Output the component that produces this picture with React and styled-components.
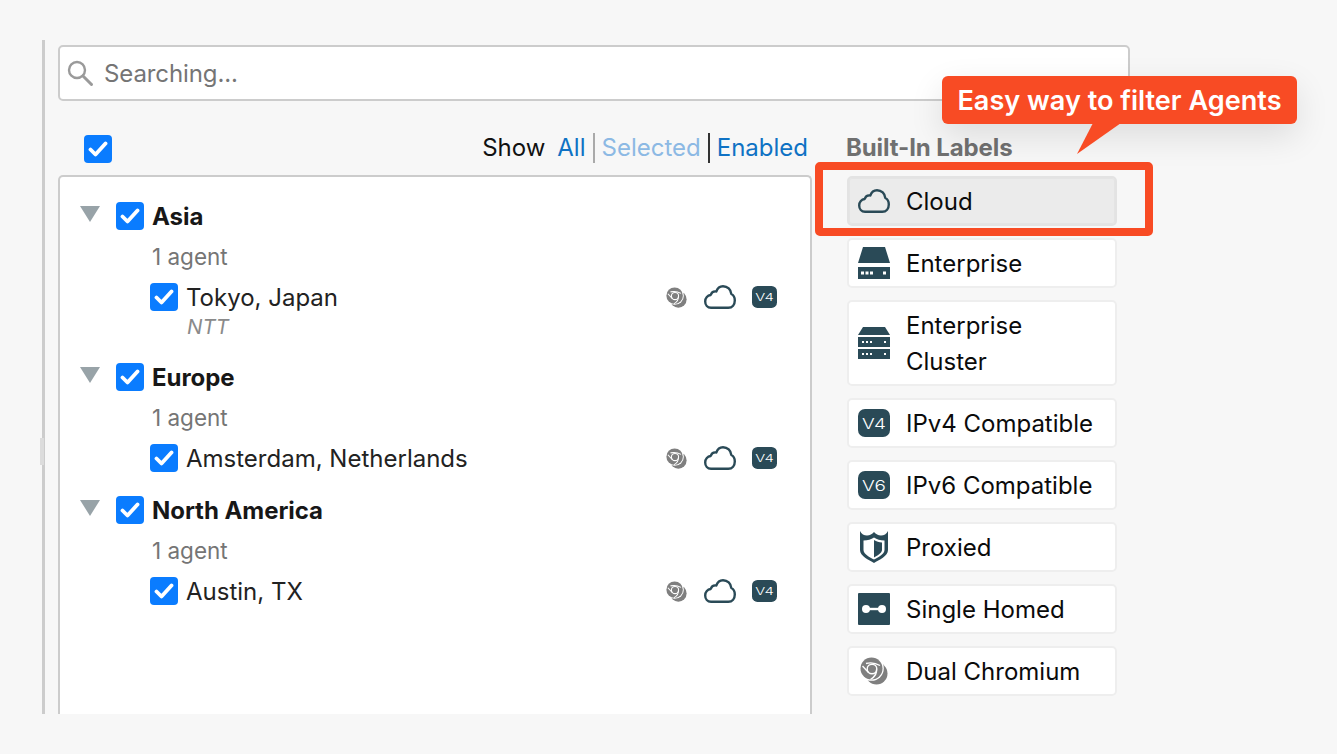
import React from "react";
import styled, { createGlobalStyle } from "styled-components";

const Global = createGlobalStyle`
  html, body { margin: 0; padding: 0; height: 100%; background: #f7f7f7; overflow: hidden; }
  body { font-family: Inter, "Liberation Sans", sans-serif; color: #111; font-kerning: normal; text-rendering: optimizeLegibility; }
`;
const Page = styled.div`
  box-sizing: border-box; width: 1337px; height: 754px; padding: 40px 0 0 42px; background: #f7f7f7;
`;
const Shell = styled.div`
  position: relative; box-sizing: border-box; width: 1088px; height: 674px;
  border-left: 3px solid #ccc; padding: 5px 0 0 13px;
  display: flex; flex-direction: column;
`;
const Handle = styled.div`
  position: absolute; left: -5px; top: 398px; width: 4px; height: 27px; background: #dcdcdc;
`;
const SearchBox = styled.div`
  box-sizing: border-box; width: 1072px; height: 56px; flex: none; background: #fff;
  border: 2px solid #ccc; border-radius: 5px; display: flex; align-items: center; padding-left: 6px; gap: 10px;
  font-size: 24px; color: #757575; letter-spacing: -0.1px;
`;
const Columns = styled.div`
  flex: 1; min-height: 0; display: flex; gap: 35px; 
`;
const LeftCol = styled.div`
  width: 754px; flex: none; display: flex; flex-direction: column; min-height: 0;
`;
const HeaderRow = styled.div`
  height: 74px; flex: none; display: flex; align-items: flex-end; justify-content: space-between;
  padding: 0 4px 12px 26px; box-sizing: border-box;
`;
const Box = styled.span`
  width: 28px; height: 28px; flex: none; background: #0a7cff; border-radius: 4px;
  display: inline-flex; align-items: center; justify-content: center;
`;
const Show = styled.div`
  display: flex; align-items: center; font-size: 24px; line-height: 32px; margin-bottom: -1px;
`;
const ShowLabel = styled.span` color: #111; margin-right: 12px; `;
const Filter = styled.span`
  color: ${p => (p.$muted ? "#8cb9e4" : "#0f72c4")};
  padding-right: 7px; margin-right: 1px;
  &:last-child { padding: 0; margin: 0; }
`;
const Bar = styled.span`
  width: 2px; height: 30px; margin-right: 7px; margin-left: -1px; background: ${p => p.$dark ? "#333" : "#aaa"};
`;
const Panel = styled.div`
  flex: 1; min-height: 0; box-sizing: border-box; background: #fff;
  border: 2px solid #ccc; border-bottom: 0; border-radius: 5px 5px 0 0;
  padding: 23px 0 0 20px;
`;
const Group = styled.section`
  margin-bottom: ${p => p.$gap}px;
`;
const GroupHead = styled.div`
  display: flex; align-items: center; height: 32px; 
`;
const Triangle = styled.span`
  width: 20px; height: 16px; flex: none; margin-right: 16px; background: #98a3a8;
  clip-path: polygon(0 0, 100% 0, 50% 100%);
  position: relative; top: -2px;
`;
const GroupName = styled.span` font-weight: 700; font-size: 24px; margin-left: 8px; color: #171717; letter-spacing: -0.05px;`;
const Count = styled.div`
  font-size: 22.5px; line-height: 32px; color: #757575; margin: 9px 0 0 72px; 
`;
const Agent = styled.div`
  display: flex; align-items: center; height: 32px; margin: 8px 0 0 70px; width: 627px; font-size: 24px;
`;
const AgentName = styled.span` margin-left: 8px; flex: 1; color: #222; `;
const Meta = styled.div`
  font-size: 20.5px; line-height: 26px; font-style: italic; color: #8a8a8a; margin: 1px 0 0 107px;
`;
const AgentIcons = styled.div`
  display: flex; align-items: center; width: 111px; flex: none; justify-content: space-between;
`;
const RightCol = styled.div`
  width: 270px; flex: none; position: relative; display: flex; flex-direction: column;
`;
const Title = styled.div`
  font-size: 24px; font-weight: 700; color: #707070; height: 75px; box-sizing: border-box;
  padding-top: 31px; line-height: 32px; letter-spacing: -0.1px; margin-left: -1px;
`;
const Labels = styled.div` display: flex; flex-direction: column; gap: 12px; `;
const Label = styled.div`
  box-sizing: border-box; min-height: 50px; display: flex; align-items: center;
  border: 2px solid ${p => p.$on ? "#e3e3e3" : "#eee"}; border-radius: 5px;
  background: ${p => p.$on ? "#ebebeb" : "#fff"};
  box-shadow: ${p => p.$on ? "inset 0 0 0 1px #e4e4e4" : "none"};
  padding: 4px 10px 4px 9px; font-size: 24px; line-height: 36px; color: #0b0b0b;
`;
const LabelText = styled.span` padding-top: 2px; `;
const IconSlot = styled.span`
  width: 32px; height: 32px; flex: none; margin-right: 16px; display: flex; align-items: center; justify-content: center;
`;
const Highlight = styled.div`
  position: absolute; left: -32px; top: 61px; width: 338px; height: 74px; box-sizing: border-box;
  border: 8px solid #f84b24; border-radius: 5px; pointer-events: none;
`;
const Callout = styled.div`
  position: absolute; left: 95px; top: -25px; box-sizing: border-box; width: 355px; height: 48px; padding-top: 1px;
  background: #f84b24; border-radius: 6px; color: #fff; font-size: 27.1px; font-weight: 600; line-height: 48px;
  text-align: center; white-space: nowrap; box-shadow: 0 12px 34px rgba(0,0,0,.11);
  &::after {
    content: ""; position: absolute; left: 135px; top: 47px; width: 44px; height: 31px; background: #f84b24;
    clip-path: polygon(16px 0, 100% 0, 0 100%);
  }
`;

const SLATE = "#2a4a57";
const Check = () => (
  <svg width="20" height="16" viewBox="0 0 20 16"><path d="M2.5 8.5 7.5 13.5 17.5 2.5" fill="none" stroke="#fff" strokeWidth="3.8" strokeLinecap="round" strokeLinejoin="round"/></svg>
);
const CB = () => <Box><Check/></Box>;
const Search = () => (
  <svg width="28" height="28" viewBox="0 0 28 28" fill="none" stroke="#9a9a9a"><circle cx="11" cy="11" r="8" strokeWidth="2.4"/><path d="M17 17 25.5 25.5" strokeWidth="3" strokeLinecap="round"/></svg>
);
const Cloud = ({ size = 32 }) => (
  <svg width={size} height={size * 0.75} viewBox="0 0 32 24" fill="none" stroke={SLATE} strokeWidth="2.4" strokeLinejoin="round">
    <path d="M7 22.700C3.500 22.700 1.200 20 1.200 16.500c0-3.500 2.500-6 5.500-6.500C7.500 7.500 9.500 6 12.300 6.500 13.500 3 16 1.200 19 1.200c4.500 0 8 3.500 8.300 7.800 2.500 1.200 3.500 3.500 3.500 6.500 0 4-2.500 7.200-6.500 7.200Z"/>
  </svg>
);
const Chrome = ({ size = 28 }) => (
  <svg width={size} height={size} viewBox="0 0 28 28">
    <circle cx="16.500" cy="16.500" r="11" fill="#7f7f7f"/>
    <circle cx="11.500" cy="11.500" r="12.300" fill="#fff"/>
    <circle cx="11.500" cy="11.500" r="11" fill="#7f7f7f"/>
    <g fill="none" stroke="#fff" strokeWidth="1.400">
      <circle cx="12" cy="12" r="4.800"/>
      <path d="M6 6.500C10 5.500 16 6.200 20 8.500"/>
      <path d="M16.500 12.500C17 16 14.500 20 10.500 22.500"/>
      <path d="M2.500 9 8.500 15.500"/>
    </g>
  </svg>
);
const Version = ({ text, size = 32 }) => (
  <svg width={size} height={size * 28 / 32} viewBox="0 0 32 28">
    <rect x="0" y="0" width="32" height="28" rx="7" fill={SLATE}/>
    <text x="16" y="19.500" textAnchor="middle" fontFamily="Inter, sans-serif" fontWeight="300" fontSize="14" fill="#fff" textLength="24" lengthAdjust="spacingAndGlyphs">{text}</text>
  </svg>
);
const Enterprise = () => (
  <svg width="32" height="32" viewBox="0 0 32 32">
    <path d="M5 0H27L32 16H0Z" fill={SLATE}/>
    <rect y="20" width="32" height="12" fill={SLATE}/>
    <path d="M3 24.500h3v3H3zM7.500 24.500h3v3h-3zM12 24.500h3v3h-3zM25 24.500h3v3h-3z" fill="#fff"/>
  </svg>
);
const Cluster = () => (
  <svg width="32" height="32" viewBox="0 0 32 32">
    <path d="M5 0H27L32 8H0Z" fill={SLATE}/>
    <rect y="10" width="32" height="10" fill={SLATE}/>
    <rect y="22" width="32" height="10" fill={SLATE}/>
    <path d="M4 14h2v2H4zM8 14h2v2H8zM12 14h2v2h-2zM26 14h2v2h-2zM4 26h2v2H4zM8 26h2v2H8zM12 26h2v2h-2zM26 26h2v2h-2z" fill="#fff"/>
  </svg>
);
const Shield = () => (
  <svg width="30" height="32" viewBox="0 0 30 32">
    <path d="M1 0C2.500 3 5 4.500 8 4.500 11 4.500 13 3 15 1 17 3 19 4.500 22 4.500 25 4.500 27.500 3 29 0V19C29 25 20 29 15 32 10 29 1 25 1 19Z" fill={SLATE}/>
    <path d="M4.500 9.500C9 9.500 12 8.500 15 6.500 18 8.500 21 9.500 25.500 9.500V19C25.500 23 19 26.500 15 28.500 11 26.500 4.500 23 4.500 19Z" fill="#fff"/>
    <path d="M15 9C17.500 10.500 20 11.500 23 11.500V19C23 22 18 25 15 26.500Z" fill={SLATE}/>
  </svg>
);
const Homed = () => (
  <svg width="32" height="32" viewBox="0 0 32 32">
    <rect width="32" height="32" rx="1" fill={SLATE}/>
    <circle cx="8" cy="16" r="4" fill="#fff"/><circle cx="24" cy="16" r="4" fill="#fff"/>
    <rect x="8" y="14.800" width="16" height="2.400" fill="#fff"/>
  </svg>
);

const labels = [
  { name: "Cloud", icon: <Cloud/>, on: true },
  { name: "Enterprise", icon: <Enterprise/> },
  { name: <>Enterprise<br/>Cluster</>, icon: <Cluster/> },
  { name: "IPv4 Compatible", icon: <Version text="V4"/> },
  { name: "IPv6 Compatible", icon: <Version text="V6"/> },
  { name: "Proxied", icon: <Shield/> },
  { name: "Single Homed", icon: <Homed/> },
  { name: "Dual Chromium", icon: <Chrome/> },
];
const groups = [
  { name: "Asia", agent: "Tokyo, Japan", meta: "NTT", gap: 21 },
  { name: "Europe", agent: "Amsterdam, Netherlands", gap: 20 },
  { name: "North America", agent: "Austin, TX", gap: 0 },
];

export default function App() {
  return (
    <Page>
      <Global/>
      <Shell>
        <Handle/>
        <SearchBox><Search/><span>Searching...</span></SearchBox>
        <Columns>
          <LeftCol>
            <HeaderRow>
              <CB/>
              <Show>
                <ShowLabel>Show</ShowLabel>
                <Filter>All</Filter><Bar/>
                <Filter $muted>Selected</Filter><Bar $dark/>
                <Filter>Enabled</Filter>
              </Show>
            </HeaderRow>
            <Panel>
              {groups.map(g => (
                <Group key={g.name} $gap={g.gap}>
                  <GroupHead><Triangle/><CB/><GroupName>{g.name}</GroupName></GroupHead>
                  <Count>1 agent</Count>
                  <Agent>
                    <CB/><AgentName>{g.agent}</AgentName>
                    <AgentIcons><Chrome size={21}/><Cloud size={32}/><Version text="V4" size={25}/></AgentIcons>
                  </Agent>
                  {g.meta && <Meta>{g.meta}</Meta>}
                </Group>
              ))}
            </Panel>
          </LeftCol>
          <RightCol>
            <Title>Built-In Labels</Title>
            <Labels>
              {labels.map((l, i) => (
                <Label key={i} $on={l.on}><IconSlot>{l.icon}</IconSlot><LabelText>{l.name}</LabelText></Label>
              ))}
            </Labels>
            <Highlight/>
            <Callout>Easy way to filter Agents</Callout>
          </RightCol>
        </Columns>
      </Shell>
    </Page>
  );
}
